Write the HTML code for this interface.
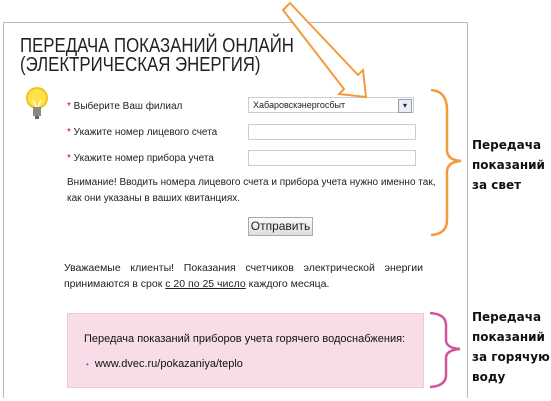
<!DOCTYPE html>
<html><head><meta charset="utf-8"><style>
body{margin:0;width:551px;height:401px;background:#fff;position:relative;overflow:hidden;font-family:"Liberation Sans",sans-serif;color:#222}
.a{position:absolute}
.box{left:3px;top:22px;width:465px;height:376px;border:1px solid #bbb;border-bottom:none;box-sizing:border-box}
.t{left:20px;top:37px;font-size:20px;line-height:19px;color:#222;transform:scaleX(0.84);transform-origin:0 0;white-space:nowrap}
.l{font-size:10px;left:67px}
.l b{color:#d00;font-weight:normal}
.in{border:1px solid #ccc;background:#fff;height:14px;left:248px;width:166px}
.s{font-size:10px;line-height:16px}
.r{font-family:"DejaVu Sans",sans-serif;font-weight:bold;font-size:12px;line-height:20px;color:#111;white-space:nowrap}
</style></head><body>
<div class="a box"></div>
<div class="a t">ПЕРЕДАЧА ПОКАЗАНИЙ ОНЛАЙН<br>(ЭЛЕКТРИЧЕСКАЯ ЭНЕРГИЯ)</div>
<svg class="a" style="left:20px;top:86px" width="36" height="42"><circle cx="17" cy="12" r="10" fill="#ffe24a" stroke="#f1c21b" stroke-width="2"/><path d="M13 14l3 7M21 14l-3 7" stroke="#fff" stroke-width="1.2"/><rect x="13" y="21" width="8" height="9" fill="#888"/><rect x="15" y="30" width="4" height="3" fill="#666"/></svg>
<div class="a l" style="top:101px"><b>*</b> Выберите Ваш филиал</div>
<div class="a l" style="top:127px"><b>*</b> Укажите номер лицевого счета</div>
<div class="a l" style="top:153px"><b>*</b> Укажите номер прибора учета</div>
<div class="a in" style="top:97px;font-size:9px;line-height:14px;padding-left:4px;box-sizing:border-box;height:16px">Хабаровскэнергосбыт<span style="position:absolute;right:1px;top:1px;width:12px;height:12px;border:1px solid #99a;background:#e8eef8;font-size:8px;text-align:center;line-height:12px">▾</span></div>
<div class="a in" style="top:124px"></div>
<div class="a in" style="top:150px"></div>
<div class="a s" style="left:67px;top:175px">Внимание! Вводить номера лицевого счета и прибора учета нужно именно так,<br>как они указаны в ваших квитанциях.</div>
<div class="a" style="left:248px;top:217px;width:63px;height:17px;border:1px solid #aaa;background:linear-gradient(#fafafa,#ddd);font-size:12px;text-align:center;line-height:17px">Отправить</div>
<div class="a s" style="left:64px;top:260px;width:359px;text-align:justify;text-align-last:left;font-size:10.5px">Уважаемые клиенты! Показания счетчиков электрической энергии принимаются в срок <u>с 20 по 25 число</u> каждого месяца.</div>
<div class="a" style="left:67px;top:313px;width:357px;height:75px;background:#f8dce8;border:1px solid #f0c8d8;box-sizing:border-box"></div>
<div class="a" style="left:84px;top:333px;font-size:11px;color:#111">Передача показаний приборов учета горячего водоснабжения:</div>
<div class="a" style="left:86px;top:358px;font-size:11px;color:#111"><span style="color:#4a7bb7;font-size:8px">•</span>&nbsp; www.dvec.ru/pokazaniya/teplo</div>
<svg class="a" style="left:0;top:0" width="551" height="401">
<polygon points="283,10 290,3 358,75 363,70 366,97 339,94 344,89" fill="#fff" stroke="#f59a3c" stroke-width="2"/>
<path d="M431 90 Q447 91 447 110 L447 150 Q447 160 461 161 Q447 162 447 172 L447 220 Q447 234 431 235" fill="none" stroke="#f59a3c" stroke-width="2.5"/>
<path d="M430 313 Q446 314 446 325 L446 340 Q446 348 460 349 Q446 350 446 358 L446 375 Q446 386 430 387" fill="none" stroke="#d0559e" stroke-width="2.5"/>
</svg>
<div class="a r" style="left:472px;top:135px">Передача<br>показаний<br>за свет</div>
<div class="a r" style="left:472px;top:307px">Передача<br>показаний<br>за горячую<br>воду</div>
</body></html>
